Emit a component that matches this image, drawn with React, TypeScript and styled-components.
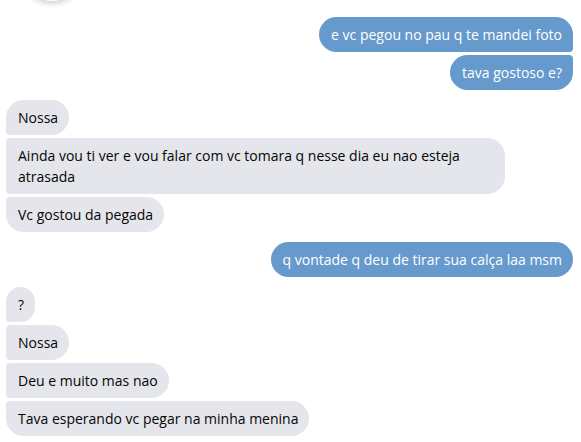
import React from "react";
import styled, { createGlobalStyle } from "styled-components";

const Global = createGlobalStyle`
  html, body { margin: 0; padding: 0; background: #ffffff; }
  body { font-family: "Open Sans", "Noto Sans", Arial, sans-serif; }
`;

const Page = styled.div`
  position: relative;
  width: 581px;
  height: 442px;
  overflow: hidden;
  background: #fff;
  padding: 17px 8px 0 6px;
  box-sizing: border-box;
  display: flex;
  flex-direction: column;
  gap: 10px;
`;

const AvatarShadow = styled.div`
  position: absolute;
  left: 20px;
  top: -63px;
  width: 64px;
  height: 64px;
  border-radius: 50%;
  background: #fff;
  box-shadow: 0 2px 6px rgba(0, 0, 0, 0.22);
`;

const Group = styled.div<{ $mine?: boolean }>`
  display: flex;
  flex-direction: column;
  align-items: ${(p) => (p.$mine ? "flex-end" : "flex-start")};
  gap: 3px;
`;

type Pos = "single" | "first" | "middle" | "last";

const radius = (mine: boolean, pos: Pos) => {
  const big = "18px";
  const small = "4px";
  const topSide = pos === "single" || pos === "first" ? big : small;
  const bottomSide = pos === "single" || pos === "last" ? big : small;
  return mine
    ? `${big} ${topSide} ${bottomSide} ${big}`
    : `${topSide} ${big} ${big} ${bottomSide}`;
};

const Bubble = styled.div<{ $mine?: boolean; $pos: Pos }>`
  max-width: 476px;
  padding: 7px 11px 7px 12px;
  font-size: 14px;
  line-height: 21px;
  border-radius: ${(p) => radius(!!p.$mine, p.$pos)};
  background: ${(p) => (p.$mine ? "#6699cc" : "#e4e6eb")};
  color: ${(p) => (p.$mine ? "#ffffff" : "#050505")};
`;

type G = { mine: boolean; msgs: string[] };

const groups: G[] = [
  { mine: true, msgs: ["e vc pegou no pau q te mandei foto", "tava gostoso e?"] },
  {
    mine: false,
    msgs: [
      "Nossa",
      "Ainda vou ti ver e vou falar com vc tomara q nesse dia eu nao esteja atrasada",
      "Vc gostou da pegada",
    ],
  },
  { mine: true, msgs: ["q vontade q deu de tirar sua calça laa msm"] },
  {
    mine: false,
    msgs: ["?", "Nossa", "Deu e muito mas nao", "Tava esperando vc pegar na minha menina"],
  },
];

const posOf = (i: number, n: number): Pos =>
  n === 1 ? "single" : i === 0 ? "first" : i === n - 1 ? "last" : "middle";

export default function App() {
  return (
    <>
      <Global />
      <Page>
        <AvatarShadow />
        {groups.map((g, gi) => (
          <Group key={gi} $mine={g.mine}>
            {g.msgs.map((m, i) => (
              <Bubble key={i} $mine={g.mine} $pos={posOf(i, g.msgs.length)}>
                {m}
              </Bubble>
            ))}
          </Group>
        ))}
      </Page>
    </>
  );
}
